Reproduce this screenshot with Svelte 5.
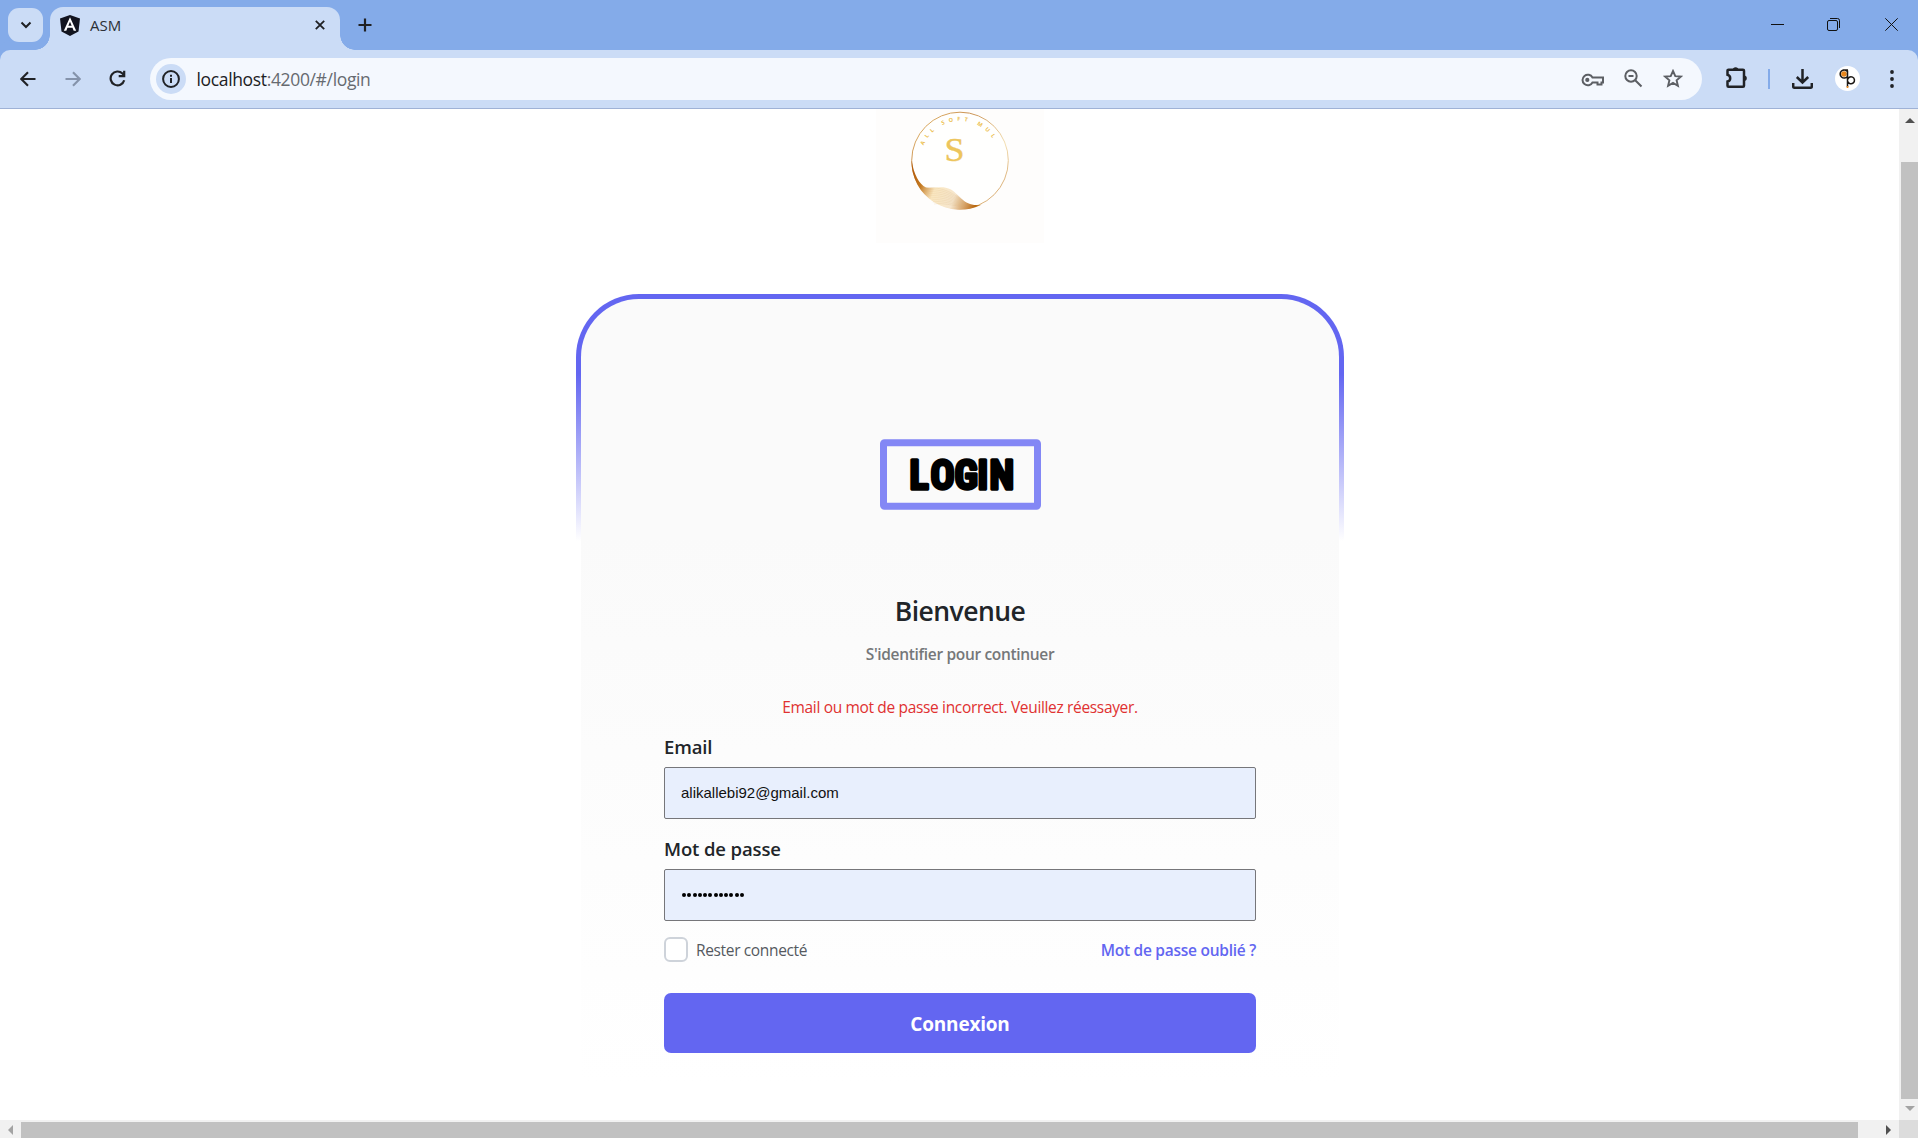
<script>
  let email = $state('alikallebi92@gmail.com');
  const passwordDots = Array.from({ length: 12 });
  const waveLines = Array.from({ length: 9 }, (_, i) => i * 2);
</script>

<div class="window">
  <header class="tabstrip">
    <button class="tab-search" aria-label="Search tabs">
      <svg width="12" height="8" viewBox="0 0 12 8"><path d="M1.500 1.500 6 6l4.500-4.500" /></svg>
    </button>
    <div class="tab">
      <svg class="favicon" width="20" height="21" viewBox="0 0 20 21">
        <path d="M10 0 20 3.500 18.500 16.500 10 21 1.500 16.500 0 3.500z" fill="#12141f" />
        <path d="M10 2.200 3.800 15.800H6.300L7.500 12.700H12.500L13.700 15.800H16.200zM10 6.700 11.700 10.700H8.300z" fill="#fff" fill-rule="evenodd" />
      </svg>
      <span class="tab-title">ASM</span>
      <svg class="tab-close" width="10" height="10" viewBox="0 0 10 10"><path d="m.8.8 8.400 8.400M9.200.8.8 9.200" /></svg>
    </div>
    <svg class="new-tab" width="14" height="14" viewBox="0 0 14 14"><path d="M7 .5v13M.5 7h13" /></svg>
    <div class="window-controls">
      <svg width="13" height="13" viewBox="0 0 13 13"><path d="M0 6.500h13" /></svg>
      <svg width="13" height="13" viewBox="0 0 13 13"><rect x=".5" y="2.500" width="10" height="10" rx="1.500" /><path d="M3 .5h7.500a2 2 0 0 1 2 2V10" /></svg>
      <svg width="13" height="13" viewBox="0 0 13 13"><path d="m.3.3 12.400 12.400M12.700.3.3 12.700" /></svg>
    </div>
  </header>

  <nav class="toolbar">
    <svg class="nav-icon back" width="16" height="16" viewBox="0 0 16 16"><path d="M15.500 8H1.500M8 1.200 1.300 8 8 14.800" /></svg>
    <svg class="nav-icon forward" width="16" height="16" viewBox="0 0 16 16"><path d="M.5 8h14M8 1.200 14.700 8 8 14.800" /></svg>
    <svg class="nav-icon reload" width="17" height="17" viewBox="0 0 17 17"><path d="M15.200 10.200A6.900 6.900 0 1 1 13.500 3.600L15 5.300M15.200.8v5.400H9.700" /></svg>
    <div class="omnibox">
      <span class="site-info">
        <svg width="18" height="18" viewBox="0 0 18 18"><circle cx="9" cy="9" r="7.900" /><path d="M9 8v5M9 4.800v2" /></svg>
      </span>
      <span class="url"><b>localhost</b>:4200/#/login</span>
      <svg class="key" width="24" height="14" viewBox="0 0 24 14"><path d="M11.500 4.500H22V9.500h-1.500V11.500h-4V9.500h-5A5.300 5.300 0 1 1 11.500 4.500z" /><circle cx="6.300" cy="6.900" r="2.100" /></svg>
      <svg class="zoom" width="19" height="19" viewBox="0 0 19 19"><circle cx="7" cy="7" r="5.700" /><path d="m11.200 11.200 6.300 6.300M4.500 7h5" /></svg>
      <svg class="star" width="20" height="19" viewBox="0 0 20 19"><path d="m10 2 2.300 5.100 5.500.5-4.200 3.700 1.300 5.500L10 13.900l-4.900 2.900 1.300-5.500-4.200-3.700 5.500-.5z" /></svg>
    </div>
    <svg class="puzzle" width="22" height="21" viewBox="0 0 22 21"><path d="M3 2.700h14a1 1 0 0 1 1 1v15a1 1 0 0 1-1 1H2.500a1 1 0 0 1-1-1v-4.200c3.600-.8 3.600-5.800 0-6.800v-4a1 1 0 0 1 1-1z" /><path class="knob" d="M6.800 3a2.800 2.800 0 0 1 5.600 0zM18 8.400a2.800 2.800 0 0 1 0 5.600z" /></svg>
    <span class="divider"></span>
    <svg class="download" width="21" height="20" viewBox="0 0 21 20"><path d="M10.500 0v13M4.800 8l5.700 5.500L16.200 8M1.200 14v3.700a1 1 0 0 0 1 1h16.600a1 1 0 0 0 1-1V14" /></svg>
    <svg class="avatar" width="25" height="25" viewBox="0 0 25 25">
      <circle cx="12.500" cy="12.500" r="12.500" fill="#fff" />
      <circle cx="9" cy="8" r="2.800" fill="#e8871e" />
      <path d="M12.500 4.500V21M12.500 5.500a4.100 4.100 0 1 0 0 5M8 4h5M12.500 14a3.500 3.500 0 1 1 .2 1.500" fill="none" stroke="#1b1714" stroke-width="1.500" />
      <path d="M12.500 20v2" stroke="#e8871e" stroke-width="1.700" />
    </svg>
    <svg class="menu" width="4" height="18" viewBox="0 0 4 18"><circle cx="2" cy="2" r="1.900" /><circle cx="2" cy="9" r="1.900" /><circle cx="2" cy="16" r="1.900" /></svg>
  </nav>

  <div class="viewport">
    <main class="page">
      <svg class="brand" width="168" height="134" viewBox="0 0 168 134">
        <defs>
          <linearGradient id="ring" x1="0" y1="0" x2="1" y2="1">
            <stop offset="0" stop-color="#e9c072" /><stop offset=".3" stop-color="#c99050" />
            <stop offset=".65" stop-color="#f3dfb2" /><stop offset="1" stop-color="#c98e4e" />
          </linearGradient>
          <linearGradient id="wave" gradientUnits="userSpaceOnUse" x1="36" y1="68" x2="106" y2="96">
            <stop offset="0" stop-color="#b5600f" /><stop offset=".15" stop-color="#c47a22" />
            <stop offset=".34" stop-color="#fbe9c4" /><stop offset=".62" stop-color="#f6e6cd" />
            <stop offset=".82" stop-color="#cf9452" /><stop offset=".92" stop-color="#b8670f" /><stop offset="1" stop-color="#d49a45" />
          </linearGradient>
          <path id="arc" d="M47.800 36.400A39 39 0 0 1 120.200 36.400" />
        </defs>
        <rect width="168" height="134" fill="#fefdfc" />
        <circle cx="84" cy="51.500" r="48.300" fill="#fffffe" stroke="url(#ring)" stroke-width="1" />
        <path d="M35.500 51C38 66 43 75 50 78.500C58 80 66 76 75 80.500C84 86 89 99 106 95.500A48.500 48.500 0 0 1 35.500 51z" fill="url(#wave)" />
        <g class="wave-lines">
          {#each waveLines as y}
            <path d="M{47 + y * 0.7} {79 + y}C{60 + y * 0.3} {78 + y} {72 - y * 0.2} {79 + y} 88 {93 + y * 0.3}" />
          {/each}
        </g>
        <text class="brand-arc"><textPath href="#arc" startOffset="0">ALL SOFT MUL</textPath></text>
        <text class="brand-initial" x="68.500" y="52" textLength="20" lengthAdjust="spacingAndGlyphs">S</text>
      </svg>

      <section class="card">
        <div class="card-body">
          <svg class="login-sign" width="162" height="71" viewBox="0 0 162 71">
            <rect x="4.500" y="3.700" width="154" height="63.500" rx="1" />
            <text x="30.500 51.500 75.500 98.500 110.500" y="49.500">LOGIN</text>
          </svg>
          <h1>Bienvenue</h1>
          <p class="subtitle">S'identifier pour continuer</p>
          <p class="error">Email ou mot de passe incorrect. Veuillez réessayer.</p>
          <form>
            <label for="email">Email</label>
            <input id="email" type="text" bind:value={email} />
            <span class="label">Mot de passe</span>
            <div class="password">
              {#each passwordDots as _}<i></i>{/each}
            </div>
            <div class="options">
              <span class="checkbox"></span>
              <span class="remember">Rester connecté</span>
              <span class="forgot">Mot de passe oublié ?</span>
            </div>
            <button class="submit" type="button"><span>Connexion</span></button>
          </form>
        </div>
      </section>
    </main>
    <div class="vscroll">
      <svg class="up" width="10" height="5" viewBox="0 0 10 5"><path d="M0 5 5 0l5 5z" /></svg>
      <span class="vthumb"></span>
      <svg class="down" width="10" height="5" viewBox="0 0 10 5"><path d="m0 0 5 5 5-5z" /></svg>
    </div>
  </div>
  <div class="hscroll">
    <svg class="left" width="5" height="10" viewBox="0 0 5 10"><path d="M5 0 0 5l5 5z" /></svg>
    <span class="hthumb"></span>
    <svg class="right" width="5" height="10" viewBox="0 0 5 10"><path d="m0 0 5 5-5 5z" /></svg>
    <span class="corner"></span>
  </div>
</div>

<style>
  :global(body) { margin: 0; overflow: hidden; }
  * { box-sizing: border-box; }
  svg { display: block; flex: none; }
  .window {
    display: flex; flex-direction: column; width: 1918px; height: 1138px;
    background: #fff; font-family: 'Open Sans', 'Noto Sans', sans-serif; color: #212529;
  }

  .tabstrip {
    display: flex; align-items: center; height: 50px; padding-left: 8px;
    background: #84abe9; stroke: #1f2023; fill: none;
  }
  .tab-search {
    position: relative; z-index: 1; display: grid; place-items: center; width: 35px; height: 34px; padding: 0;
    border: 0; border-radius: 11px; background: #cbdcf6; stroke: #1f2023; stroke-width: 2; fill: none;
  }
  .tab {
    position: relative; display: flex; align-items: center; align-self: flex-end;
    width: 290px; height: 43px; margin-left: 7px; padding: 0 15px 0 10px;
    border-radius: 13px 13px 0 0; background: #cbdcf6;
  }
  .tab::before, .tab::after { content: ''; position: absolute; bottom: 0; width: 15px; height: 15px; }
  .tab::before { left: -15px; background: radial-gradient(circle at 0 0, transparent 14.500px, #cbdcf6 15px); }
  .tab::after { right: -15px; background: radial-gradient(circle at 100% 0, transparent 14.500px, #cbdcf6 15px); }
  .favicon { stroke: none; margin-top: -7px; }
  .tab-title { margin: -7px 0 0 10px; font-size: 15px; letter-spacing: 0; color: #2b3036; }
  .tab-close { margin: -7px 0 0 auto; stroke-width: 1.800; }
  .new-tab { margin-left: 18px; stroke-width: 2.200; }
  .window-controls { display: flex; gap: 44px; margin: -1px 20px 0 auto; stroke: #111; stroke-width: 1; }
  .window-controls svg:nth-child(2) { margin: 0 1px 0 -1px; }

  .toolbar {
    display: flex; align-items: center; height: 59px; padding: 0 24px 1px 20px;
    border-bottom: 1px solid #9fb2d6; border-radius: 10px 10px 0 0;
    background: #cbdcf6; box-shadow: 0 -10px 0 #84abe9;
    fill: none; stroke: #202226; stroke-width: 2.100;
  }
  .forward { margin-left: 28.500px; stroke: #8593ab; }
  .reload { margin-left: 28.500px; stroke-width: 2.200; }
  .omnibox {
    display: flex; align-items: center; width: 1552px; height: 42px; margin-left: 24px;
    padding: 0 19.500px 0 6px; border-radius: 21px; background: #f4f8fe; stroke: #5c5f64; stroke-width: 2;
  }
  .site-info {
    display: grid; place-items: center; width: 30px; height: 30px; border-radius: 50%;
    background: #cbdcf6; stroke: #202226; stroke-width: 2;
  }
  .url { margin: 0 auto 0 10.500px; font-size: 17.500px; letter-spacing: -0.35px; color: #666a70; }
  .url b { font-weight: 400; color: #202124; }
  .key { margin-top: 2px; }
  .key circle { fill: #5c5f64; stroke: none; }
  .zoom { margin-left: 19px; }
  .star { margin-left: 20px; stroke-width: 1.900; }
  .puzzle { margin: -3px 0 0 23.500px; stroke-width: 2.500; }
  .knob { fill: #202226; stroke: none; }
  .divider { width: 2px; height: 20px; margin-left: 20px; background: #84abe9; }
  .download { margin-left: 22px; stroke-width: 2.500; }
  .avatar { margin-left: 22px; stroke: none; }
  .menu { margin-left: auto; fill: #202226; stroke: none; }

  .viewport { display: flex; flex: 1; min-height: 0; }
  .page { display: flex; flex: 1; flex-direction: column; align-items: center; padding-left: 21px; overflow: hidden; }
  .brand-arc { font: 700 5.500px 'Open Sans', sans-serif; letter-spacing: 4.100px; fill: #ecc050; }
  .brand-initial { font: 33px 'Liberation Serif', serif; fill: #edc55c; stroke: #edc55c; stroke-width: 0.4; }
  .wave-lines { fill: none; stroke: #d7ae70; stroke-width: 0.3; opacity: 0.6; }

  .card {
    flex: none; width: 768px; height: 790px; margin-top: 51px; padding: 5px 5px 0;
    border-radius: 63px 63px 0 0;
    background: linear-gradient(#6366f1 80px, rgb(99 102 241 / 0) 247px);
  }
  .card-body {
    display: flex; flex-direction: column; align-items: center; height: 785px; padding-top: 140px;
    border-radius: 58px 58px 0 0; background: linear-gradient(#fafafa 30%, #fff);
  }
  .login-sign rect { fill: none; stroke: #8387f5; stroke-width: 7; stroke-linejoin: round; }
  .login-sign text {
    font: 600 40px 'Liberation Sans Narrow', Roboto, sans-serif; font-stretch: 75%;
    fill: #000; stroke: #000; stroke-width: 3.400; stroke-linejoin: round;
  }
  h1, p { margin: 0; white-space: nowrap; }
  h1 { margin-top: 83px; font-size: 26.500px; line-height: 36px; font-weight: 600; letter-spacing: -0.550px; }
  .subtitle { margin-top: 14px; font-size: 15.500px; line-height: 22px; font-weight: 600; color: #757779; letter-spacing: -0.330px; }
  .error { margin-top: 31px; font-size: 15.500px; line-height: 22px; color: #e03131; letter-spacing: -0.340px; }
  form { display: flex; flex-direction: column; width: 592px; margin-top: 15px; }
  label, .label { font-size: 18.500px; line-height: 27px; font-weight: 600; letter-spacing: -0.130px; }
  input, .password {
    height: 52px; margin-top: 7px; padding: 0 16px 2px; border: 1px solid #76767a; border-radius: 2px;
    background: #e8effd; font: 15px 'Liberation Sans', Arial, sans-serif; color: #111;
  }
  .label { margin-top: 16px; }
  .password { display: flex; align-items: center; gap: 1.250px; padding: 0 17px; }
  .password i { width: 4px; height: 4px; border-radius: 50%; background: #000; }
  .options { display: flex; align-items: center; height: 25px; margin-top: 16px; font-size: 15.500px; white-space: nowrap; }
  .checkbox { width: 24px; height: 25px; border: 2px solid #ced3da; border-radius: 6px; background: #fff; }
  .remember { margin-left: 8px; color: #55595f; letter-spacing: -0.350px; }
  .forgot { margin-left: auto; font-weight: 600; color: #6366f1; letter-spacing: -0.260px; }
  .submit {
    height: 60px; margin-top: 31px; padding-top: 3px; border: 0; border-radius: 7px; background: #6366f1;
    font: 700 19px 'Open Sans', sans-serif; color: #fff; letter-spacing: -0.2px;
  }

  .vscroll { display: flex; flex-direction: column; align-items: center; width: 19px; padding: 9px 0 8px 2px; background: #f1f1f1; }
  .up { fill: #505050; }
  .vthumb { width: 17px; height: 937px; margin-top: 39px; background: #c1c1c1; }
  .down { margin-top: 7px; fill: #a3a3a3; }
  .hscroll { display: flex; align-items: center; height: 18px; padding-left: 8px; background: #f1f1f1; }
  .left { margin-top: 2px; fill: #a3a3a3; }
  .hthumb { align-self: flex-end; width: 1837px; height: 16px; margin-left: 8px; background: #c1c1c1; }
  .right { margin: 2px 0 0 28px; fill: #505050; }
  .corner { width: 19px; height: 18px; margin-left: auto; background: #dcdcdc; }
</style>
